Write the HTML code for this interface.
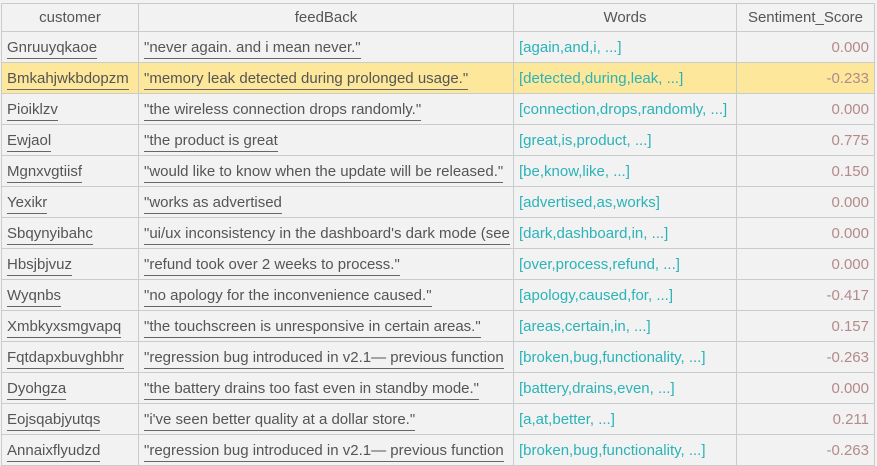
<!DOCTYPE html>
<html><head><style>
body{margin:0;background:#f1f2f1;width:877px;height:455px;overflow:hidden;font-family:"Liberation Sans",sans-serif;font-size:15px;color:#555}
table{border-collapse:collapse;table-layout:fixed;position:absolute;left:1px;top:3px;width:873px}
td,th{border:1px solid #c9cccc;height:30px;padding:0 5px;white-space:nowrap;overflow:hidden;font-weight:normal}
th{height:27px;color:#555;text-align:center}
td.u span{border-bottom:1px solid #666;padding-bottom:2px}
td.w{color:#2bb3b8}
td.s{text-align:right;color:#b48a8a}
tr.h td{background:#fde79a}
</style></head><body>
<table>
<colgroup><col style="width:137px"><col style="width:375px"><col style="width:223px"><col style="width:138px"></colgroup>
<tr><th>customer</th><th>feedBack</th><th>Words</th><th>Sentiment_Score</th></tr>
<tr><td class="u"><span>Gnruuyqkaoe</span></td><td class="u"><span>"never again. and i mean never."</span></td><td class="w">[again,and,i, ...]</td><td class="s">0.000</td></tr>
<tr class="h"><td class="u"><span>Bmkahjwkbdopzm</span></td><td class="u"><span>"memory leak detected during prolonged usage."</span></td><td class="w">[detected,during,leak, ...]</td><td class="s">-0.233</td></tr>
<tr><td class="u"><span>Pioiklzv</span></td><td class="u"><span>"the wireless connection drops randomly."</span></td><td class="w">[connection,drops,randomly, ...]</td><td class="s">0.000</td></tr>
<tr><td class="u"><span>Ewjaol</span></td><td class="u"><span>"the product is great</span></td><td class="w">[great,is,product, ...]</td><td class="s">0.775</td></tr>
<tr><td class="u"><span>Mgnxvgtiisf</span></td><td class="u"><span>"would like to know when the update will be released."</span></td><td class="w">[be,know,like, ...]</td><td class="s">0.150</td></tr>
<tr><td class="u"><span>Yexikr</span></td><td class="u"><span>"works as advertised</span></td><td class="w">[advertised,as,works]</td><td class="s">0.000</td></tr>
<tr><td class="u"><span>Sbqynyibahc</span></td><td class="u"><span>"ui/ux inconsistency in the dashboard's dark mode (see</span></td><td class="w">[dark,dashboard,in, ...]</td><td class="s">0.000</td></tr>
<tr><td class="u"><span>Hbsjbjvuz</span></td><td class="u"><span>"refund took over 2 weeks to process."</span></td><td class="w">[over,process,refund, ...]</td><td class="s">0.000</td></tr>
<tr><td class="u"><span>Wyqnbs</span></td><td class="u"><span>"no apology for the inconvenience caused."</span></td><td class="w">[apology,caused,for, ...]</td><td class="s">-0.417</td></tr>
<tr><td class="u"><span>Xmbkyxsmgvapq</span></td><td class="u"><span>"the touchscreen is unresponsive in certain areas."</span></td><td class="w">[areas,certain,in, ...]</td><td class="s">0.157</td></tr>
<tr><td class="u"><span>Fqtdapxbuvghbhr</span></td><td class="u"><span>"regression bug introduced in v2.1— previous function</span></td><td class="w">[broken,bug,functionality, ...]</td><td class="s">-0.263</td></tr>
<tr><td class="u"><span>Dyohgza</span></td><td class="u"><span>"the battery drains too fast even in standby mode."</span></td><td class="w">[battery,drains,even, ...]</td><td class="s">0.000</td></tr>
<tr><td class="u"><span>Eojsqabjyutqs</span></td><td class="u"><span>"i've seen better quality at a dollar store."</span></td><td class="w">[a,at,better, ...]</td><td class="s">0.211</td></tr>
<tr><td class="u"><span>Annaixflyudzd</span></td><td class="u"><span>"regression bug introduced in v2.1— previous function</span></td><td class="w">[broken,bug,functionality, ...]</td><td class="s">-0.263</td></tr>
</table>
</body></html>
